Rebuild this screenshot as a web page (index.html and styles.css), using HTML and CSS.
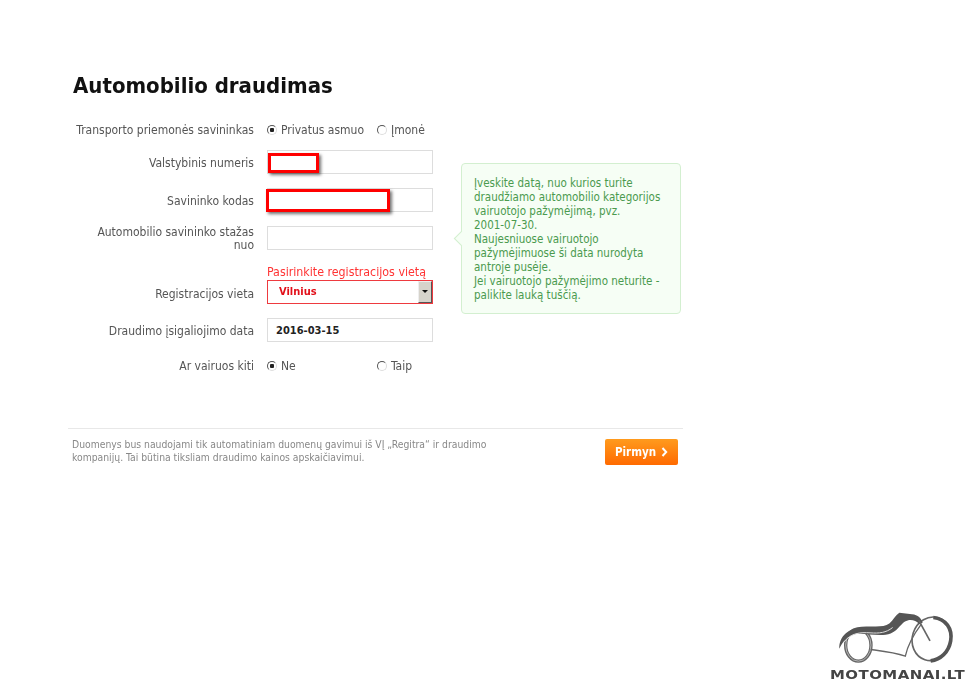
FILE: index.html
```html
<!DOCTYPE html>
<html lang="lt">
<head>
  <meta charset="UTF-8" />
  <title>Automobilio draudimas</title>
  <link rel="stylesheet" href="styles.css">
</head>
<body>
  <div class="page">
    <h1>Automobilio draudimas</h1>

    <form class="insurance-form">
      <div class="row row-first">
        <div class="row-label">Transporto priemonės savininkas</div>
        <div class="options">
          <span class="option"><i class="radio radio-on"></i>Privatus asmuo</span>
          <span class="option"><i class="radio"></i>Įmonė</span>
        </div>
      </div>

      <div class="row">
        <div class="row-label">Valstybinis numeris</div>
        <div class="field">
          <div class="text-box"></div>
          <div class="mark mark-plate"></div>
        </div>
      </div>

      <div class="row">
        <div class="row-label">Savininko kodas</div>
        <div class="field">
          <div class="text-box"></div>
          <div class="mark mark-code"></div>
        </div>
      </div>

      <div class="row">
        <div class="row-label row-label-wrap">Automobilio savininko stažas nuo</div>
        <div class="field">
          <div class="text-box"></div>
        </div>
      </div>

      <div class="row row-select">
        <div class="row-label">Registracijos vieta</div>
        <div class="field">
          <div class="error-message">Pasirinkite registracijos vietą</div>
          <div class="select-box">
            <span class="select-value">Vilnius</span>
            <span class="select-button"></span>
          </div>
        </div>
      </div>

      <div class="row">
        <div class="row-label">Draudimo įsigaliojimo data</div>
        <div class="field">
          <div class="text-box text-box-value">2016-03-15</div>
        </div>
      </div>

      <div class="row row-last">
        <div class="row-label">Ar vairuos kiti</div>
        <div class="options">
          <span class="option"><i class="radio radio-on"></i>Ne</span>
          <span class="option"><i class="radio"></i>Taip</span>
        </div>
      </div>

      <div class="tip">
        Įveskite datą, nuo kurios turite draudžiamo automobilio kategorijos vairuotojo pažymėjimą, pvz. <span class="nowrap">2001-07-30.</span><br>
        Naujesniuose vairuotojo pažymėjimuose ši data nurodyta antroje pusėje.<br>
        Jei vairuotojo pažymėjimo neturite - palikite lauką tuščią.
      </div>
    </form>

    <div class="footer">
      <p class="footer-note">Duomenys bus naudojami tik automatiniam duomenų gavimui iš VĮ „Regitra“ ir draudimo kompanijų. Tai būtina tiksliam draudimo kainos apskaičiavimui.</p>
      <button type="button" class="next-button">Pirmyn <svg class="chevron" viewBox="0 0 7 10"><path d="M1.5 1 L5.2 5 L1.5 9" /></svg></button>
    </div>
  </div>

  <div class="logo">
    <svg class="logo-bike" viewBox="0 0 450 200">
      <!-- rear wheel -->
      <ellipse class="bike-ring" cx="115" cy="135" rx="38" ry="48" />
      <ellipse class="bike-ring-gap" cx="115" cy="135" rx="38" ry="48" />
      <!-- front wheel, heavier on the right -->
      <ellipse class="bike-line" cx="335" cy="116" rx="58" ry="66" transform="rotate(18 335 116)" />
      <path class="bike-heavy" d="M340 52 C378 56 398 86 392 122 C386 156 362 178 332 182" />
      <!-- tank and seat -->
      <path class="bike-body" d="M58 146 C56 108 88 84 125 80 C160 76 190 84 208 70 C220 60 226 46 238 38 L276 42 C294 44 304 54 308 68 L298 72 C286 58 268 56 255 64 C240 74 232 92 212 100 C180 112 130 96 104 102 C82 108 68 124 58 146 Z" />
      <path class="bike-gap" d="M72 126 C92 98 122 96 150 98 C178 100 198 98 218 82" />
      <!-- frame and fork -->
      <path class="bike-thin" d="M152 148 C182 152 222 156 256 168 C262 140 280 104 304 72" />
      <path class="bike-line" d="M296 60 L330 122" />
    </svg>
    <div class="logo-text">MOTOMANAI.LT</div>
  </div>
</body>
</html>
```

FILE: styles.css
```css
* {
  box-sizing: border-box;
}

html, body {
  height: 100%;
}

body {
  margin: 0;
  position: relative;
  overflow: hidden;
  background: white;
  font-family: 'DejaVu Sans', Verdana, sans-serif;
  font-stretch: condensed;
  font-size: 12px;
  color: #555;
}

.page {
  width: 615px;
  margin-left: 68px;
  padding-top: 72px;
  filter: blur(0.35px);
}

h1 {
  margin: 0 0 18px 5px;
  height: 28px;
  font-size: 22px;
  line-height: 28px;
  font-weight: bold;
  color: #111;
}

.insurance-form {
  position: relative;
  height: 310px;
}

.row {
  display: grid;
  grid-template-columns: 186px 166px;
  grid-template-rows: 100%;
  column-gap: 13px;
  align-items: center;
  height: 24px;
  margin-bottom: 14px;
}

.row-first {
  margin-bottom: 8px;
}

.row-select {
  align-items: end;
  height: 40px;
}

.row-select .row-label {
  height: 24px;
  line-height: 24px;
}

.row-last {
  height: 20px;
}

.row-label {
  padding-top: 2px;
  text-align: right;
  line-height: 13px;
}

.row-first .row-label,
.row-last .row-label {
  padding-top: 0;
}

.row-label-wrap {
  padding-left: 20px;
  padding-top: 1px;
}

.options {
  display: flex;
}

.option {
  display: flex;
  flex: none;
  align-items: center;
  width: 110px;
  white-space: nowrap;
}

.radio {
  width: 10px;
  height: 10px;
  margin-right: 4px;
  border: 1px solid #ddd;
  border-top-color: #555;
  border-left-color: #555;
  border-radius: 50%;
  background: white;
}

.radio-on {
  background: radial-gradient(circle, #222 0, #222 2px, white 2.5px);
}

.field {
  position: relative;
}

.text-box {
  height: 24px;
  padding-left: 8px;
  border: 1px solid #ddd;
  background: white;
  line-height: 23px;
}

.text-box-value {
  font-size: 11px;
  font-weight: bold;
  color: #222;
}

.mark {
  position: absolute;
  top: 3px;
  left: 1px;
  height: 20px;
  border: 3px solid #f00;
  background: white;
  box-shadow: 2px 2px 3px rgba(0, 0, 0, 0.55);
}

.mark-plate {
  width: 51px;
}

.mark-code {
  top: 1px;
  left: -1px;
  width: 124px;
  height: 23px;
}

.error-message {
  height: 16px;
  line-height: 16px;
  font-size: 12.3px;
  color: #f33;
  white-space: nowrap;
}

.select-box {
  display: flex;
  justify-content: space-between;
  height: 24px;
  border: 1.5px solid #ee3a3f;
  background: white;
}

.select-value {
  padding-left: 11px;
  line-height: 21px;
  font-size: 11px;
  font-weight: bold;
  color: #e2101a;
}

.select-button {
  position: relative;
  width: 14px;
  background: #d6d3cb;
  border: 1px solid;
  border-color: #eee #555 #555 #eee;
}

.select-button::after {
  content: "";
  position: absolute;
  top: 8px;
  left: 3px;
  border: 3.5px solid transparent;
  border-top-color: #111;
  border-bottom-width: 0;
}

.tip {
  position: absolute;
  top: 45px;
  left: 393px;
  width: 220px;
  height: 151px;
  padding: 12px 12px 0 12px;
  border: 1px solid #d3efd0;
  border-radius: 4px;
  background: #f6fef5;
  color: #4a9a4e;
  font-size: 11.5px;
  line-height: 14px;
}

.tip::before {
  content: "";
  position: absolute;
  top: 69px;
  left: -6px;
  width: 10px;
  height: 10px;
  background: #f6fef5;
  border-left: 1px solid #d3efd0;
  border-bottom: 1px solid #d3efd0;
  transform: rotate(45deg);
}

.nowrap {
  white-space: nowrap;
}

.footer {
  display: flex;
  justify-content: space-between;
  align-items: flex-start;
  padding: 9px 5px 0 4px;
  border-top: 1px solid #e8e8e8;
}

.footer-note {
  width: 425px;
  margin: 0;
  font-size: 10.3px;
  line-height: 13px;
  color: #888;
}

.next-button {
  display: flex;
  align-items: center;
  justify-content: center;
  gap: 5px;
  width: 73px;
  height: 26px;
  margin-top: 1px;
  padding: 0;
  border: none;
  border-radius: 2px;
  background: linear-gradient(to bottom, #ff9b1e, #ff6a00);
  font-family: inherit;
  font-stretch: condensed;
  font-size: 11.5px;
  font-weight: bold;
  color: #fff;
}

.chevron {
  width: 7px;
  height: 10px;
  fill: none;
  stroke: white;
  stroke-width: 2;
}

.logo {
  position: absolute;
  top: 600px;
  left: 820px;
  width: 150px;
  filter: blur(0.4px);
}

.logo-bike {
  display: block;
  width: 150px;
  height: 67px;
}

.bike-ring {
  fill: none;
  stroke: #666;
  stroke-width: 10;
}

.bike-ring-gap {
  fill: none;
  stroke: #ddd;
  stroke-width: 2;
}

.bike-line {
  fill: none;
  stroke: #666;
  stroke-width: 5;
}

.bike-heavy {
  fill: none;
  stroke: #555;
  stroke-width: 11;
}

.bike-thin {
  fill: none;
  stroke: #666;
  stroke-width: 4;
}

.bike-gap {
  fill: none;
  stroke: #ddd;
  stroke-width: 3;
}

.bike-body {
  fill: #555;
}

.logo-text {
  margin-top: 1px;
  margin-left: 10px;
  font-size: 13px;
  font-stretch: normal;
  line-height: 14px;
  font-weight: bold;
  color: #444;
  letter-spacing: 0.4px;
  white-space: nowrap;
  transform: scaleX(1.15);
  transform-origin: left;
}
```
